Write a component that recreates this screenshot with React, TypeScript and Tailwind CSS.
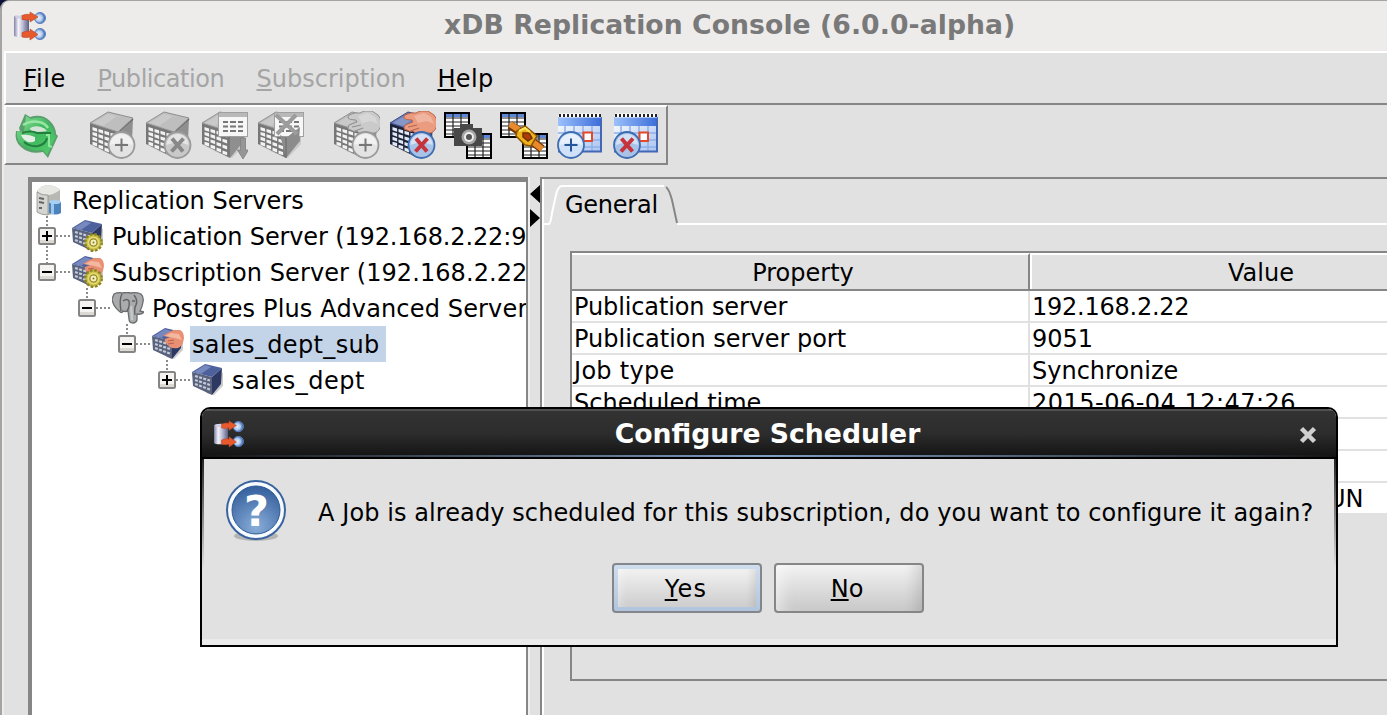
import React from "react";

type Badge = "add" | "remove";

function Mnemonic({ text }: { text: string }) {
  return (
    <>
      <span className="underline decoration-2 underline-offset-[2px] [text-decoration-skip-ink:none]">{text[0]}</span>
      {text.slice(1)}
    </>
  );
}

function AppLogo({ className }: { className: string }) {
  return (
    <svg className={className} viewBox="0 0 32 30">
      <defs>
        <linearGradient id="cyl" x1="0" x2="1">
          <stop offset="0" stopColor="#7d81a4" />
          <stop offset=".3" stopColor="#f4f4fa" />
          <stop offset=".55" stopColor="#c3c4dc" />
          <stop offset="1" stopColor="#5b5e80" />
        </linearGradient>
        <radialGradient id="ball" cx=".4" cy=".5">
          <stop offset="0" stopColor="#e6effb" />
          <stop offset=".6" stopColor="#b3ccee" />
          <stop offset="1" stopColor="#5078b8" />
        </radialGradient>
      </defs>
      <path d="M0 6q0-2 7-2t8 2v18q0 2-8 2t-7-2z" fill="url(#cyl)" />
      <ellipse cx="7.500" cy="6" rx="6.500" ry="1.600" fill="#cfd0e2" />
      <circle cx="26" cy="7" r="5.500" fill="url(#ball)" stroke="#5b82c0" strokeWidth="1" />
      <circle cx="26" cy="23" r="5.500" fill="url(#ball)" stroke="#5b82c0" strokeWidth="1" />
      <path d="M8 4.500q4-2 8-1V1l8 5-8 5V8.500q-4 1-8 0z" fill="#e8592c" stroke="#b8492c" strokeWidth=".6" />
      <path d="M8 21.500q4-2 8-1v-2.500l8 5.500-8 5.500v-3q-4 1-8 0z" fill="#e8592c" stroke="#b8492c" strokeWidth=".6" />
    </svg>
  );
}

function RefreshIcon() {
  return (
    <svg className="size-12" viewBox="0 0 48 48">
      <defs>
        <linearGradient id="grn" x1="0" y1="0" x2="1" y2="1">
          <stop offset="0" stopColor="#8ce097" />
          <stop offset=".5" stopColor="#3fb75f" />
          <stop offset="1" stopColor="#57cf6d" />
        </linearGradient>
      </defs>
      <path d="M13 3l5 3q12-4 20 4 6 6 6 13l2 2-10 22-5-6q-13 3-22-5-7-6-5-16h4l-1-3z" fill="#2c8a45" opacity=".75" />
      <path d="M14 5l5 3q11-4 18 4 5 5 5 12l2 1-9 19-4-5q-13 2-21-5-6-5-5-14l7 1z" fill="url(#grn)" />
      <path d="M18 17q5-3 11-1 4 1 6 4-5 1-12 1-5-1-5-4z" fill="#d5e4d7" />
      <path d="M9 24q7-1 14 2v4q-3 2-7 1-5-2-7-7z" fill="#e4eee5" />
      <path d="M11 14q8-5 16-3 6 1 9 6" fill="none" stroke="#98e6a3" strokeWidth="2.500" />
      <path d="M10 22q9-3 15 0h14M35 27q-1 6-9 8-8 1-14-4" fill="none" stroke="#237f3d" strokeWidth="2" />
      <path d="M34 24l3 0v11l3 1" fill="none" stroke="#8ee79b" strokeWidth="2" />
    </svg>
  );
}

function Block({ color }: { color: boolean }) {
  const face = color ? "#1d2338" : "#777";
  const top = color ? "#6b80bb" : "#bebebe";
  const side = color ? "#33416f" : "#8f8f8f";
  const cells: React.ReactNode[] = [];
  for (let c = 0; c < 4; c++) {
    for (let r = 0; r < 4; r++) {
      cells.push(
        <path
          key={`${c}-${r}`}
          d={`M${4.5 + c * 6} ${16 + c * 1.9 + r * (4.9 + c * 0.35)}l4.600 1.400v3.400l-4.600-1.600z`}
          fill={color ? "#e2e9f4" : "#f2f2f2"}
        />,
      );
    }
  }
  return (
    <g>
      <path d="M14 40l18 7 13-14v-8z" fill="#000" opacity=".1" />
      <path d="M2 12l28 9v26L2 33z" fill={face} />
      <path d="M30 21L45 8l-1 22-14 17z" fill={side} />
      <path d="M30 21L45 8" stroke={color ? "#1b2342" : "#666"} strokeWidth="1.500" />
      <path d="M2 12L20 1l25 6-15 14z" fill={top} stroke={color ? "#3c4b82" : "#8f8f8f"} strokeWidth="1" />
      <path d="M5 12L20 3l9 2-14 10z" fill="#fff" opacity=".18" />
      {cells}
    </g>
  );
}

function RoundBadge({ kind, cx, cy = 34.5, color }: { kind: Badge; cx: number; cy?: number; color: boolean }) {
  const ring = color ? "#3d6cb0" : "#9a9a9a";
  const fill = color ? "#cfe1f8" : "#e3e3e3";
  return (
    <g>
      <circle
        cx={cx}
        cy={cy}
        r="13"
        fill={kind === "remove" ? (color ? "#a9c3e8" : "#c9c9c9") : fill}
        stroke={ring}
        strokeWidth="1.800"
      />
      <path d={`M${cx - 11} ${cy}a11 11 0 0 1 22 0q-11-5-22 0`} fill="#fff" opacity=".5" />
      {kind === "add" ? (
        <path d={`M${cx - 6.500} ${cy}h13M${cx} ${cy - 6.500}v13`} stroke={color ? "#24549a" : "#777"} strokeWidth="2" />
      ) : (
        <path
          d={`M${cx - 5.500} ${cy - 6.500}l11 13M${cx + 6} ${cy - 6.500}l-12 13`}
          stroke={color ? "#c5343d" : "#888"}
          strokeWidth="4"
        />
      )}
    </g>
  );
}

function Hand({ color }: { color: boolean }) {
  return (
    <g>
      <path
        d="M17 4q6-3 11-2l4-2h8l6 4q3 3 3 9-1 7-6 9l-13 0q-4 0-5-2-4 1-6-1-3 0-3-2l1-3 8-3-1-2q-7 0-8-2 0-2 1-3z"
        fill={color ? "#eb9c80" : "#cacaca"}
        stroke={color ? "#b9654b" : "#8f8f8f"}
        strokeWidth="1"
      />
      <path d="M26 5l10-3 7 4 3 7-7-3-9 2z" fill="#fff" opacity=".25" />
      <path d="M20 16l9-2M23 20l8-3" stroke={color ? "#b9654b" : "#8f8f8f"} strokeWidth="1.200" />
    </g>
  );
}

function ServerIcon({ badge, hand = false, color = false }: { badge: Badge; hand?: boolean; color?: boolean }) {
  return (
    <svg className="size-12" viewBox="0 0 48 48">
      <Block color={color} />
      {hand && <Hand color={color} />}
      <RoundBadge kind={badge} cx={33.500} cy={34} color={color} />
    </svg>
  );
}

function ServerListIcon({ filter = false }: { filter?: boolean }) {
  return (
    <svg className="size-12" viewBox="0 0 48 48">
      <Block color={false} />
      <rect x="18.500" y="1.500" width="29" height="24" fill="#f7f7f7" stroke="#a0a0a0" />
      <rect x="19" y="2" width="28" height="4" fill="#b9b9b9" />
      <path d="M23 11h5m2 0h6m2 0h5M23 15.500h5m2 0h6m2 0h5M23 20h5m2 0h6m2 0h5" stroke="#777" strokeWidth="1.800" />
      {filter ? (
        <>
          <path d="M24 24l6 3 14-11-1 13-13 18z" fill="#8c8c8c" />
          <path d="M30 27v20" stroke="#666" strokeWidth="1" />
          <path d="M20 4l21 19M40 4L21 23" stroke="#9c9c9c" strokeWidth="4" />
        </>
      ) : (
        <path d="M40.500 27h5v12h3l-5.500 9-5.500-9h3z" fill="#969696" stroke="#808080" strokeWidth=".8" />
      )}
    </svg>
  );
}

function Sheet({ x, y }: { x: number; y: number }) {
  return (
    <g transform={`translate(${x} ${y})`}>
      <rect x="1" y="1" width="24" height="24" fill="#fff" stroke="#000" strokeWidth="2" />
      <rect x="2" y="2" width="22" height="3" fill="#5b87d6" />
      <path d="M2 6h22M2 10h22M2 14h22M2 18h22M2 22h22M9 2v22M17 2v22" stroke="#222" strokeWidth="1.200" />
    </g>
  );
}

function SnapshotIcon() {
  return (
    <svg className="size-12" viewBox="0 0 48 48">
      <Sheet x={0} y={1} />
      <Sheet x={22} y={22} />
      <path d="M10 17h6v-4h13v4h9v18H10z" fill="#484848" />
      <circle cx="25" cy="26" r="7.500" fill="#a5a5a5" />
      <circle cx="25" cy="26" r="5" fill="#eee" />
      <circle cx="25" cy="26" r="3" fill="#555" />
    </svg>
  );
}

function SyncIcon() {
  return (
    <svg className="size-12" viewBox="0 0 48 48">
      <Sheet x={0} y={1} />
      <Sheet x={22} y={22} />
      <path d="M10 14l9 6M33 31l9 7" stroke="#733500" strokeWidth="8.500" />
      <path d="M10 13l9 6M33 31l9 7" stroke="#e88a2c" strokeWidth="6" />
      <path d="M17 20l8-5 12 10-6 10-6-1-9-9z" fill="#f0b21a" stroke="#8a5200" strokeWidth="1.500" />
      <path d="M23 22l6 0 3 5-4 3-5-4z" fill="#b03c05" stroke="#6e3300" strokeWidth="1.500" />
      <path d="M19 20l6-3 5 4" stroke="#ffe75c" strokeWidth="2" fill="none" />
    </svg>
  );
}

function CalendarIcon({ badge }: { badge: Badge }) {
  return (
    <svg className="size-12" viewBox="0 0 48 48">
      <defs>
        <linearGradient id="calHead" x1="0" x2="1">
          <stop offset="0" stopColor="#9cc1fb" />
          <stop offset="1" stopColor="#3a6bd8" />
        </linearGradient>
        <linearGradient id="calBody" x1="0" y1="0" x2="1" y2="1">
          <stop offset="0" stopColor="#fff" />
          <stop offset="1" stopColor="#a9c3f0" />
        </linearGradient>
      </defs>
      <rect x="2" y="4" width="44" height="37" fill="url(#calBody)" />
      <rect x="2" y="6" width="44" height="9" fill="url(#calHead)" />
      <path d="M3 4.500h42" stroke="#fff" strokeWidth="4" />
      <path d="M3 4.500h42" stroke="#222" strokeWidth="3" strokeDasharray="2 2" />
      <path d="M2 22h44M2 29h44M2 36h44M9 15v26M18 15v26M27 15v26M36 15v26" stroke="#8fb0e8" strokeWidth="1.500" />
      <path d="M45 8v32.500M2 40.500h44" stroke="#4267b4" strokeWidth="2" />
      <rect x="27.500" y="21.500" width="8.500" height="8.500" fill="#fff" stroke="#e4482a" strokeWidth="2" />
      <RoundBadge kind={badge} cx={15} cy={34} color />
    </svg>
  );
}

function Toolbar() {
  return (
    <div className="flex h-[60px] w-[664px] shrink-0 items-center border-t-2 border-r-2 border-b-2 border-l-2 border-t-white border-r-[#868686] border-b-[#868686] border-l-white pl-1.5">
      <RefreshIcon />
      <div className="ml-7 flex gap-2">
        <ServerIcon badge="add" />
        <ServerIcon badge="remove" />
        <ServerListIcon />
        <ServerListIcon filter />
      </div>
      <div className="ml-7 flex gap-2">
        <ServerIcon badge="add" hand />
        <ServerIcon badge="remove" hand color />
        <SnapshotIcon />
        <SyncIcon />
        <CalendarIcon badge="add" />
        <CalendarIcon badge="remove" />
      </div>
    </div>
  );
}

function Gear() {
  return (
    <g>
      <circle cx="21.500" cy="22.500" r="8.300" fill="#c9bd45" stroke="#8e8420" strokeWidth="2.400" strokeDasharray="2.600 1.800" />
      <circle cx="21.500" cy="22.500" r="6" fill="#e3da74" />
      <circle cx="21.500" cy="22.500" r="3.600" fill="#f3efc0" stroke="#958a24" strokeWidth="1.300" />
      <circle cx="21.500" cy="22.500" r="1" fill="#857b1e" />
    </g>
  );
}

function TreeBlock({ hand = false, gear = false }: { hand?: boolean; gear?: boolean }) {
  return (
    <svg className="size-8 shrink-0" viewBox="0 0 32 32">
      <path d="M14 29l8 2 9-9V8z" fill="#000" opacity=".2" />
      <path d="M0 8l20 5v18L1 22z" fill="#59627c" />
      <path d="M20 13l10-9-1 16-9 11z" fill="#2d3963" />
      <path d="M0 8L13 0l17 4-10 9z" fill="#4c609c" />
      <path d="M2 8l11-7 6 2-10 7z" fill="#7688bd" />
      <path d="M3 12l15 4.500M3 16l15 5M3 20l15 5.500" stroke="#c3cad8" strokeWidth="2.200" strokeDasharray="3 1.300" />
      {hand && (
        <>
          <path d="M11 8q7-5 11-6h6q4 2 4 8-1 8-6 10-8 1-10-3-4-3-3-6l5-2z" fill="#e88f74" />
          <path d="M13 8l6-3 8 1 3 6-7-2z" fill="#f4b8a1" />
          <path d="M16 13l6-1M16 16l6-1" stroke="#b85f46" strokeWidth="1" />
        </>
      )}
      {gear && <Gear />}
    </svg>
  );
}

function RootIcon() {
  return (
    <svg className="size-8 shrink-0" viewBox="0 0 32 32">
      <path d="M5 7q5-6 11-6 9 1 12 5v22l-11 3q-9 0-12-3z" fill="#b7b7b3" />
      <path d="M5 7q5-6 11-6 9 1 12 5-7 5-12 5-7 0-11-4z" fill="#e6e6e2" />
      <path d="M5 8q5 4 11 3v20q-7 0-11-3z" fill="#d4d4d0" stroke="#92928e" strokeWidth=".8" />
      <path d="M7 14l5 1M7 18l5 1M7 24h3" stroke="#666" strokeWidth="2" />
      <path d="M17 18q5-3 12 0v11q-5 3-12 0z" fill="#4c83bd" />
      <path d="M19 18h3v12h-3z" fill="#9cc7ee" />
      <ellipse cx="23" cy="18" rx="6" ry="2" fill="#a9d0f2" />
    </svg>
  );
}

function ElephantIcon() {
  return (
    <svg className="size-8 shrink-0" viewBox="0 0 32 32">
      <path
        d="M2 2q4-2 8-1 5-1 9 0 5-1 10 1 3 3 2 8-1 6-3 9l4 1q-3 3-7 2v6q-1 3-4 3-4 0-4-4l-1-8q-3 1-5 0-1 3-4 0Q1 14 0 7z"
        fill="#a9abac"
        stroke="#6a6d6f"
        strokeWidth="1.300"
      />
      <path d="M10 2q-3 5-1 17M11 9q4-3 6 0 1 6-2 10M22 3q4 5 2 10-2 3-1 10M20 9h3" fill="none" stroke="#606365" strokeWidth="1.400" />
      <path d="M19 14q1 8 1 14" stroke="#c6c7c8" strokeWidth="2.500" fill="none" />
    </svg>
  );
}

function Expander({ open }: { open: boolean }) {
  return (
    <svg className="h-[18px] w-[34px] shrink-0" viewBox="0 0 34 18">
      <rect x="1" y="1" width="16" height="16" rx="1.500" fill="#f4f3f0" stroke="#858585" strokeWidth="2" />
      <path d="M2 13h14v3H2z" fill="#dcd9d2" />
      <path d={open ? "M4 9h10" : "M4 9h10M9 4v10"} stroke="#000" strokeWidth="2" />
      <path d="M18 9h16" stroke="#8a8a8a" strokeWidth="2" strokeDasharray="2 2" />
    </svg>
  );
}

function TreeRow({
  indent,
  open,
  icon,
  label,
  selected = false,
}: {
  indent: string;
  open?: boolean;
  icon: React.ReactNode;
  label: React.ReactNode;
  selected?: boolean;
}) {
  return (
    <div className={`flex h-9 items-center whitespace-nowrap ${indent}`}>
      {open !== undefined && <Expander open={open} />}
      {icon}
      <span className={`ml-1.5 flex h-9 items-center pt-0.5 pr-1.5 pl-0.5 ${selected ? "bg-[#c3d3e8]" : ""}`}>{label}</span>
    </div>
  );
}

function ServerTree() {
  return (
    <div className="relative ml-6 w-[500px] shrink-0 overflow-hidden border-t-[5px] border-r-2 border-l-4 border-[#868686] bg-white">
      <TreeRow indent="pl-0" icon={<RootIcon />} label="Replication Servers" />
      <TreeRow
        indent="pl-1.5"
        open={false}
        icon={<TreeBlock gear />}
        label={<span className="tracking-[-0.130px]">Publication Server (192.168.2.22:9</span>}
      />
      <TreeRow
        indent="pl-1.5"
        open
        icon={<TreeBlock hand gear />}
        label={<span className="tracking-[0.080px]">Subscription Server (192.168.2.22</span>}
      />
      <TreeRow
        indent="pl-[46px]"
        open
        icon={<ElephantIcon />}
        label={<span className="tracking-[0.150px]">Postgres Plus Advanced Server</span>}
      />
      <TreeRow
        indent="pl-[86px]"
        open
        icon={<TreeBlock hand />}
        label={<span className="tracking-[0.350px]">sales_dept_sub</span>}
        selected
      />
      <TreeRow
        indent="pl-[126px]"
        open={false}
        icon={<TreeBlock />}
        label={<span className="tracking-[0.500px]">sales_dept</span>}
      />
      <svg className="pointer-events-none absolute top-0 left-0 h-[216px] w-[200px]" viewBox="0 0 200 216">
        <path d="M15 34v11M15 64v17M55 106v11M95 142v11M135 178v11" stroke="#8a8a8a" strokeWidth="2" strokeDasharray="2 2" />
      </svg>
    </div>
  );
}

const rows = [
  { name: "Publication server", value: "192.168.2.22", nameClass: "tracking-[-0.120px]", valueClass: "tracking-[-0.250px]" },
  { name: "Publication server port", value: "9051", nameClass: "", valueClass: "" },
  { name: "Job type", value: "Synchronize", nameClass: "tracking-[0.300px]", valueClass: "" },
  { name: "Scheduled time", value: "2015-06-04 12:47:26", nameClass: "", valueClass: "tracking-[0.480px]" },
  { name: "", value: "", nameClass: "", valueClass: "" },
  { name: "", value: "", nameClass: "", valueClass: "" },
  { name: "", value: "UN", nameClass: "", valueClass: "ml-[296px]" },
];

function PropertyTable() {
  return (
    <div className="ml-[26px] h-[430px] w-[922px] border-2 border-[#868686] whitespace-nowrap">
      <div className="flex h-[38px] border-b-2 border-[#868686]">
        <div className="flex w-[458px] items-center justify-center border-t-2 border-r-2 border-t-white border-r-[#868686] pt-0.5 pl-1.5">
          Property
        </div>
        <div className="flex flex-1 items-center justify-center border-t-2 border-l-2 border-white pt-0.5">Value</div>
      </div>
      {rows.map(({ name, value, nameClass, valueClass }, i) => (
        <div key={i} className={`flex bg-white ${i === rows.length - 1 ? "h-[30px]" : "h-8 border-b-2 border-[#e1e1e1]"}`}>
          <div className="flex w-[458px] items-center border-r-2 border-[#e1e1e1] pt-0.5 pl-0.5">
            <span className={nameClass}>{name}</span>
          </div>
          <div className="flex flex-1 items-center pt-0.5 pl-0.5">
            <span className={valueClass}>{value}</span>
          </div>
        </div>
      ))}
    </div>
  );
}

function DetailPane() {
  return (
    <div className="w-[1000px] shrink-0 border-t-2 border-l-2 border-[#868686]">
      <div className="h-full border-l-2 border-white">
        <div className="relative flex h-[46px] items-center pt-1.5 pl-[21px]">
          <svg className="absolute top-0 left-0 h-[46px] w-[900px]" viewBox="0 0 900 46">
            <path d="M0 45H5Q7 43 8 34L12 16Q14 7 18 7H120" fill="none" stroke="#fff" strokeWidth="2" />
            <path d="M122 8q3 2 6 13l5 23" fill="none" stroke="#868686" strokeWidth="2" />
            <path d="M133 45H900" stroke="#fff" strokeWidth="2" />
          </svg>
          <span className="relative tracking-[-0.250px]">General</span>
        </div>
        <div className="h-[26px]" />
        <PropertyTable />
      </div>
    </div>
  );
}

function QuestionIcon() {
  return (
    <svg className="mt-0.5 h-16 w-[62px] shrink-0" viewBox="0 0 62 64">
      <defs>
        <radialGradient id="qFill" cx=".5" cy=".85" r=".85">
          <stop offset="0" stopColor="#89add9" />
          <stop offset="1" stopColor="#345f9c" />
        </radialGradient>
      </defs>
      <ellipse cx="31" cy="56" rx="22" ry="5" fill="#000" opacity=".2" />
      <circle cx="31" cy="30" r="29" fill="#f7faff" stroke="#3a649f" strokeWidth="2" />
      <circle cx="31" cy="30" r="24" fill="url(#qFill)" stroke="#2f5a97" strokeWidth="1" />
      <text x="31.500" y="46" textAnchor="middle" fontFamily="DejaVu Sans" fontWeight="700" fontSize="43" fill="#fff">
        ?
      </text>
    </svg>
  );
}

function ConfirmDialog() {
  return (
    <div className="absolute top-[407px] left-[200px] flex h-[240px] w-[1138px] flex-col overflow-hidden rounded-t-[10px] border-2 border-black bg-[#e1e1e1]">
      <div className="relative flex h-[50px] shrink-0 items-center border-t-2 border-b-2 border-t-[#505050] border-b-black bg-linear-to-b from-[#333] via-[#2c2c2c] to-[#131313] pl-3">
        <AppLogo className="h-[28px] w-[30px]" />
        <h2 className="absolute inset-x-0 top-0 pr-[3px] text-center text-[26.667px] leading-[45px] font-bold whitespace-nowrap text-white">
          Configure Scheduler
        </h2>
        <svg className="absolute top-[15px] right-[19px] size-[18px]" viewBox="0 0 18 18">
          <path d="M2.500 2.500l13 13M15.500 2.500l-13 13" stroke="#d0d0d0" strokeWidth="4.500" />
        </svg>
        <div className="absolute inset-x-0 bottom-0 h-0.5 bg-linear-to-r from-transparent via-[#7f9fc4] to-transparent" />
      </div>
      <div className="relative flex flex-1 flex-col border-b-[6px] border-[#ebebeb]">
        <div className="absolute top-0 left-0 h-[110px] w-0.5 bg-linear-to-b from-[#222] to-transparent" />
        <div className="absolute top-0 right-0 h-[110px] w-0.5 bg-linear-to-b from-[#222] to-transparent" />
        <div className="flex h-[104px] items-center pl-[23px] whitespace-nowrap">
          <QuestionIcon />
          <p className="ml-[31px] pt-1 tracking-[0.090px]">
            A Job is already scheduled for this subscription, do you want to configure it again?
          </p>
        </div>
        <div className="flex gap-3 pl-[410px]">
          <button className="h-[50px] w-[150px] rounded-[4px] border-2 border-[#83878c] bg-linear-to-b from-[#cfdeee] to-[#b0c5dd] p-1">
            <span className="flex h-full items-center justify-center bg-linear-to-b from-[#f2f2f2] to-[#cdcdcd] pt-0.5 pr-0.5 shadow-[inset_6px_0_8px_-4px_rgba(255,255,255,.4),inset_-8px_0_10px_-6px_rgba(0,0,0,.12)]">
              <span className="tracking-[1.300px]">
                <Mnemonic text="Yes" />
              </span>
            </span>
          </button>
          <button className="h-[50px] w-[150px] rounded-[4px] border-2 border-[#868686] bg-linear-to-b from-[#f3f3f3] to-[#c8c8c8] pt-0.5 pr-1 shadow-[inset_14px_0_14px_-8px_rgba(255,255,255,.5),inset_-16px_0_14px_-10px_rgba(0,0,0,.13)]">
            <Mnemonic text="No" />
          </button>
        </div>
      </div>
    </div>
  );
}

export default function App() {
  return (
    <div className="relative h-[715px] w-[1387px] overflow-hidden bg-[#0b1436] font-['DejaVu_Sans',sans-serif] text-[24px] leading-[30px] text-black">
      <div className="flex h-full w-full flex-col overflow-hidden rounded-tl-[9px] border-t border-l-2 border-[#a5a4a3] bg-[#edeceb] pl-0.5">
        <header className="relative flex h-[50px] shrink-0 items-center pl-2.5">
          <AppLogo className="h-[30px] w-8" />
          <h1 className="absolute top-[9px] left-[440px] text-[26.667px] tracking-[0.060px] font-bold whitespace-nowrap text-[#797979]">
            xDB Replication Console (6.0.0-alpha)
          </h1>
        </header>
        <div className="flex w-[1600px] flex-1 flex-col border-t-2 border-white bg-[#e1e1e1]">
          <nav className="flex h-[52px] shrink-0 items-center border-b-2 border-l-2 border-b-[#868686] border-l-white pt-0.5 pl-[17.500px] whitespace-nowrap">
            <span className="w-[74px] tracking-[0.500px]">
              <Mnemonic text="File" />
            </span>
            <span className="w-[159px] tracking-[-0.450px] text-[#a5a5a5]">
              <Mnemonic text="Publication" />
            </span>
            <span className="w-[181px] text-[#a5a5a5]">
              <Mnemonic text="Subscription" />
            </span>
            <span className="tracking-[0.300px]">
              <Mnemonic text="Help" />
            </span>
          </nav>
          <Toolbar />
          <main className="flex flex-1 pt-3">
            <ServerTree />
            <div className="w-3 shrink-0 border-l-2 border-[#efefef]">
              <svg className="mt-2 h-[42px] w-2.5" viewBox="0 0 10 42">
                <path d="M10 0v18L0 9zM0 24v18l10-9z" fill="#000" />
              </svg>
            </div>
            <DetailPane />
          </main>
        </div>
      </div>
      <ConfirmDialog />
    </div>
  );
}
